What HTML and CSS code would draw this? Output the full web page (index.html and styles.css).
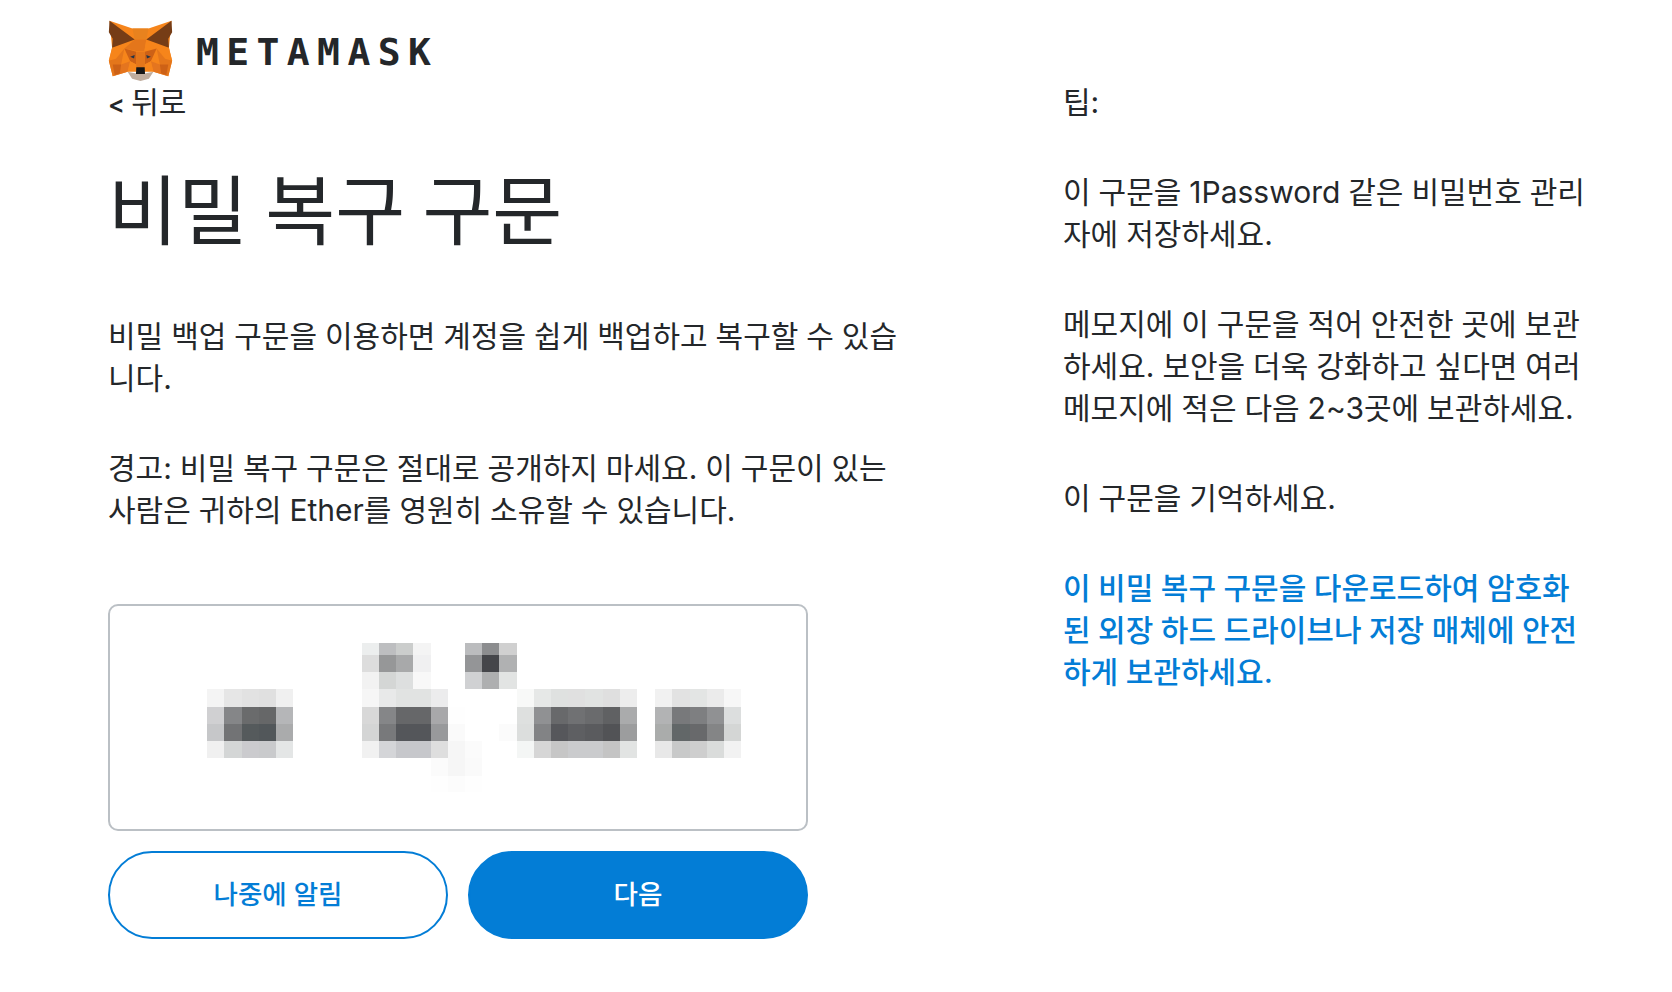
FILE: index.html
```html
<!DOCTYPE html>
<html lang="ko">
  <head>
    <meta charset="utf-8">
    <title>비밀 복구 구문</title>
    <link rel="stylesheet" href="styles.css">
  </head>
  <body>
    <!-- 로고 -->
    <header class="logo">
      <svg class="fox" viewBox="10 12 200 192" width="65" height="62">
        <polygon fill="#f6851b" points="14,14 85,38 135,38 206,14 198,98 208,138 196,186 150,172 70,172 24,186 12,138 22,98"/>
        <polygon fill="#e8821e" points="85,38 135,38 128,72 92,72"/>
        <polygon fill="#e4761b" points="92,72 128,72 122,108 98,108 60,100"/>
        <polygon fill="#f6851b" points="128,72 160,100 122,108"/>
        <g id="half">
          <polygon fill="#763d16" points="14,14 92,72 22,98 24,70 12,50"/>
          <polygon fill="#f6851b" points="22,98 60,100 34,132 12,138"/>
          <polygon fill="#e4761b" points="60,100 34,132 12,138 24,186 50,150"/>
          <polygon fill="#cd6116" points="60,100 97,110 97,150 78,140"/>
          <polygon fill="#e4751f" points="50,150 78,140 70,172 24,186"/>
          <polygon fill="#cd6116" points="24,150 50,150 46,178 30,182"/>
          <polygon fill="#f6851b" points="78,140 97,150 95,160 70,172"/>
          <polygon fill="#233447" points="78,126 92,120 90,131"/>
        </g>
        <use href="#half" transform="matrix(-1 0 0 1 220 0)"/>
        <polygon fill="#e4761b" points="97,110 123,110 123,160 97,160"/>
        <polygon fill="#c0ad9e" points="70,172 97,178 123,178 150,172 136,194 110,201 84,194"/>
        <polygon fill="#161616" points="97,158 123,158 124,179 96,179"/>
      </svg>
      <span class="wordmark">METAMASK</span>
    </header>

    <div class="page">
      <!-- 왼쪽 -->
      <main class="main">
        <a class="back"><span class="chevron">&lt;</span> 뒤로</a>
        <h1 class="title">비밀 복구 구문</h1>
        <p>비밀 백업 구문을 이용하면 계정을 쉽게 백업하고 복구할 수 있습<br>니다.</p>
        <p>경고: 비밀 복구 구문은 절대로 공개하지 마세요. 이 구문이 있는<br>사람은 귀하의 Ether를 영원히 소유할 수 있습니다.</p>

        <div class="secret">
          <svg class="mosaic" viewBox="0 0 696 222" shape-rendering="crispEdges">
            <!-- 블록 1 -->
            <rect x="97" y="83" width="17" height="18" fill="#f4f4f4"/><rect x="114" y="83" width="18" height="18" fill="#e6e6e6"/><rect x="132" y="83" width="17" height="18" fill="#e2e2e2"/><rect x="149" y="83" width="17" height="18" fill="#e0e0e0"/><rect x="166" y="83" width="17" height="18" fill="#f0f0f0"/>
            <rect x="97" y="101" width="17" height="17" fill="#d0d0d2"/><rect x="114" y="101" width="18" height="17" fill="#858688"/><rect x="132" y="101" width="17" height="17" fill="#6a6b6c"/><rect x="149" y="101" width="17" height="17" fill="#666768"/><rect x="166" y="101" width="17" height="17" fill="#b5b6b8"/>
            <rect x="97" y="118" width="17" height="17" fill="#c6c7c9"/><rect x="114" y="118" width="18" height="17" fill="#727375"/><rect x="132" y="118" width="17" height="17" fill="#555a5c"/><rect x="149" y="118" width="17" height="17" fill="#52575a"/><rect x="166" y="118" width="17" height="17" fill="#aaabac"/>
            <rect x="97" y="135" width="17" height="17" fill="#f0f0f0"/><rect x="114" y="135" width="18" height="17" fill="#d4d6d6"/><rect x="132" y="135" width="17" height="17" fill="#cbcbce"/><rect x="149" y="135" width="17" height="17" fill="#c9cacc"/><rect x="166" y="135" width="17" height="17" fill="#e4e6e6"/>
            <!-- 블록 2 -->
            <rect x="252" y="37" width="17" height="12" fill="#eceeee"/><rect x="269" y="37" width="17" height="12" fill="#bdbec0"/><rect x="286" y="37" width="17" height="12" fill="#cbcdcc"/><rect x="303" y="37" width="18" height="12" fill="#f4f4f4"/>
            <rect x="252" y="49" width="17" height="17" fill="#dddddd"/><rect x="269" y="49" width="17" height="17" fill="#969798"/><rect x="286" y="49" width="17" height="17" fill="#a8a9aa"/><rect x="303" y="49" width="18" height="17" fill="#f0f0f1"/>
            <rect x="252" y="66" width="17" height="17" fill="#f2f2f2"/><rect x="269" y="66" width="17" height="17" fill="#d4d6d5"/><rect x="286" y="66" width="17" height="17" fill="#dddfdf"/><rect x="303" y="66" width="18" height="17" fill="#f8f8f8"/>
            <rect x="252" y="83" width="17" height="18" fill="#f6f6f6"/><rect x="269" y="83" width="17" height="18" fill="#e8e9e9"/><rect x="286" y="83" width="35" height="18" fill="#e1e3e2"/><rect x="321" y="83" width="17" height="18" fill="#ececed"/>
            <rect x="252" y="101" width="17" height="17" fill="#d8d8d8"/><rect x="269" y="101" width="17" height="17" fill="#858688"/><rect x="286" y="101" width="35" height="17" fill="#666769"/><rect x="321" y="101" width="17" height="17" fill="#a8a8aa"/>
            <rect x="252" y="118" width="17" height="17" fill="#d4d5d5"/><rect x="269" y="118" width="17" height="17" fill="#78797b"/><rect x="286" y="118" width="35" height="17" fill="#54565a"/><rect x="321" y="118" width="17" height="17" fill="#98999b"/>
            <rect x="252" y="135" width="17" height="17" fill="#f1f1f1"/><rect x="269" y="135" width="17" height="17" fill="#d4d5d8"/><rect x="286" y="135" width="35" height="17" fill="#c6c7cb"/><rect x="321" y="135" width="17" height="17" fill="#dedede"/>
            <!-- 블록 3 -->
            <rect x="355" y="37" width="17" height="12" fill="#bbbcbe"/><rect x="372" y="37" width="17" height="12" fill="#8c8d8f"/><rect x="389" y="37" width="18" height="12" fill="#d0d0d0"/>
            <rect x="355" y="49" width="17" height="17" fill="#949597"/><rect x="372" y="49" width="17" height="17" fill="#45464a"/><rect x="389" y="49" width="18" height="17" fill="#b0b1b2"/>
            <rect x="355" y="66" width="17" height="17" fill="#d0d1d3"/><rect x="372" y="66" width="17" height="17" fill="#aeafb0"/><rect x="389" y="66" width="18" height="17" fill="#e2e4e3"/>
            <!-- 블록 4 -->
            <rect x="407" y="83" width="17" height="18" fill="#f8f9f8"/><rect x="424" y="83" width="17" height="18" fill="#e6e8e7"/><rect x="441" y="83" width="17" height="18" fill="#dfe1e0"/><rect x="458" y="83" width="17" height="18" fill="#e0e0e0"/><rect x="475" y="83" width="18" height="18" fill="#e1e3e2"/><rect x="493" y="83" width="17" height="18" fill="#dfdfdf"/><rect x="510" y="83" width="17" height="18" fill="#ededed"/>
            <rect x="407" y="101" width="17" height="17" fill="#dee0df"/><rect x="424" y="101" width="17" height="17" fill="#909193"/><rect x="441" y="101" width="17" height="17" fill="#68696b"/><rect x="458" y="101" width="17" height="17" fill="#707173"/><rect x="475" y="101" width="18" height="17" fill="#6a6b6d"/><rect x="493" y="101" width="17" height="17" fill="#606163"/><rect x="510" y="101" width="17" height="17" fill="#aaabac"/>
            <rect x="407" y="118" width="17" height="17" fill="#dcdedd"/><rect x="424" y="118" width="17" height="17" fill="#828385"/><rect x="441" y="118" width="17" height="17" fill="#56575b"/><rect x="458" y="118" width="17" height="17" fill="#5e5f62"/><rect x="475" y="118" width="18" height="17" fill="#5a5b5e"/><rect x="493" y="118" width="17" height="17" fill="#525356"/><rect x="510" y="118" width="17" height="17" fill="#9c9d9e"/>
            <rect x="407" y="135" width="17" height="17" fill="#f4f6f5"/><rect x="424" y="135" width="17" height="17" fill="#d6d6d6"/><rect x="441" y="135" width="17" height="17" fill="#c6c6c6"/><rect x="458" y="135" width="17" height="17" fill="#cacbcd"/><rect x="475" y="135" width="18" height="17" fill="#cacbcd"/><rect x="493" y="135" width="17" height="17" fill="#c4c4c4"/><rect x="510" y="135" width="17" height="17" fill="#e2e4e3"/>
            <!-- 블록 5 -->
            <rect x="545" y="83" width="17" height="18" fill="#f1f1f1"/><rect x="562" y="83" width="18" height="18" fill="#e2e2e2"/><rect x="580" y="83" width="17" height="18" fill="#e3e5e4"/><rect x="597" y="83" width="17" height="18" fill="#ebebeb"/><rect x="614" y="83" width="17" height="18" fill="#f7f7f7"/>
            <rect x="545" y="101" width="17" height="17" fill="#b2b3b4"/><rect x="562" y="101" width="18" height="17" fill="#78797b"/><rect x="580" y="101" width="17" height="17" fill="#7e7f81"/><rect x="597" y="101" width="17" height="17" fill="#909193"/><rect x="614" y="101" width="17" height="17" fill="#dcdede"/>
            <rect x="545" y="118" width="17" height="17" fill="#aaacab"/><rect x="562" y="118" width="18" height="17" fill="#626768"/><rect x="580" y="118" width="17" height="17" fill="#68696b"/><rect x="597" y="118" width="17" height="17" fill="#848586"/><rect x="614" y="118" width="17" height="17" fill="#d4d6d5"/>
            <rect x="545" y="135" width="17" height="17" fill="#e8e8e8"/><rect x="562" y="135" width="18" height="17" fill="#c8c9c9"/><rect x="580" y="135" width="17" height="17" fill="#cecece"/><rect x="597" y="135" width="17" height="17" fill="#dadcdb"/><rect x="614" y="135" width="17" height="17" fill="#f2f2f2"/>
            <!-- 희미한 부분 -->
            <rect x="338" y="101" width="17" height="17" fill="#fefefe"/><rect x="338" y="118" width="17" height="17" fill="#fafafa"/><rect x="389" y="118" width="18" height="17" fill="#fbfbfb"/>
            <rect x="338" y="135" width="17" height="17" fill="#f6f6f6"/><rect x="355" y="135" width="17" height="17" fill="#fbfbfb"/>
            <rect x="321" y="152" width="17" height="18" fill="#fbfbfb"/><rect x="338" y="152" width="17" height="18" fill="#f6f6f6"/><rect x="355" y="152" width="17" height="18" fill="#fafafa"/>
            <rect x="321" y="170" width="17" height="16" fill="#fefefe"/><rect x="338" y="170" width="17" height="16" fill="#fcfcfc"/><rect x="355" y="170" width="17" height="16" fill="#fefefe"/>
          </svg>
        </div>

        <div class="buttons">
          <button class="btn btn-outline">나중에 알림</button>
          <button class="btn btn-primary">다음</button>
        </div>
      </main>

      <!-- 오른쪽 팁 -->
      <aside class="tips">
        <p>팁:</p>
        <p>이 구문을 1Password 같은 비밀번호 관리<br>자에 저장하세요.</p>
        <p>메모지에 이 구문을 적어 안전한 곳에 보관<br>하세요. 보안을 더욱 강화하고 싶다면 여러<br>메모지에 적은 다음 2~3곳에 보관하세요.</p>
        <p>이 구문을 기억하세요.</p>
        <p class="download">이 비밀 복구 구문을 다운로드하여 암호화<br>된 외장 하드 드라이브나 저장 매체에 안전<br>하게 보관하세요.</p>
      </aside>
    </div>
  </body>
</html>
```

FILE: styles.css
```css
body {
  margin: 0;
  background-color: white;
  color: #24272a;
  font-family: "Inter", "Noto Sans CJK KR", sans-serif;
  font-size: 30px;
  line-height: 42px;
  word-spacing: -0.5px;
}

p {
  margin: 0 0 48px;
}

.logo {
  display: flex;
  align-items: center;
  height: 62px;
  padding: 20px 0 0 108px;
}

.fox {
  display: block;
}

.wordmark {
  margin-top: 2px;
  margin-left: 23px;
  font-family: "DejaVu Sans Mono", monospace;
  font-size: 38px;
  font-weight: bold;
  letter-spacing: 7.4px;
}

.page {
  display: flex;
  padding-left: 108px;
}

.main {
  width: 800px;
}

.back {
  display: block;
  margin-top: -1px;
  word-spacing: -2px;
}

.chevron {
  font-size: 25px;
  font-weight: 600;
  line-height: 1;
}

.title {
  margin: 43px 0 59px;
  font-size: 76px;
  font-weight: 400;
  line-height: 90px;
  word-spacing: -4px;
}

.secret {
  box-sizing: border-box;
  width: 700px;
  height: 227px;
  margin-top: 73px;
  border: 2px solid #bbc0c5;
  border-radius: 10px;
}

.main p {
  margin-bottom: 48px;
}

.main p:last-of-type {
  margin-bottom: 0;
}

.mosaic {
  display: block;
  width: 696px;
  height: 222px;
}

.buttons {
  display: flex;
  gap: 20px;
  width: 700px;
  margin-top: 20px;
}

.btn {
  flex: 1;
  box-sizing: border-box;
  height: 88px;
  padding-bottom: 6px;
  border-radius: 44px;
  font-family: inherit;
  font-size: 26.5px;
  font-weight: 500;
}

.btn-outline {
  border: 2px solid #037dd6;
  background-color: white;
  color: #037dd6;
}

.btn-primary {
  border: 2px solid #037dd6;
  background-color: #037dd6;
  color: white;
}

.tips {
  width: 540px;
  margin-top: -1px;
  margin-left: 155px;
}

.download {
  color: #037dd6;
  font-weight: 500;
}
```
